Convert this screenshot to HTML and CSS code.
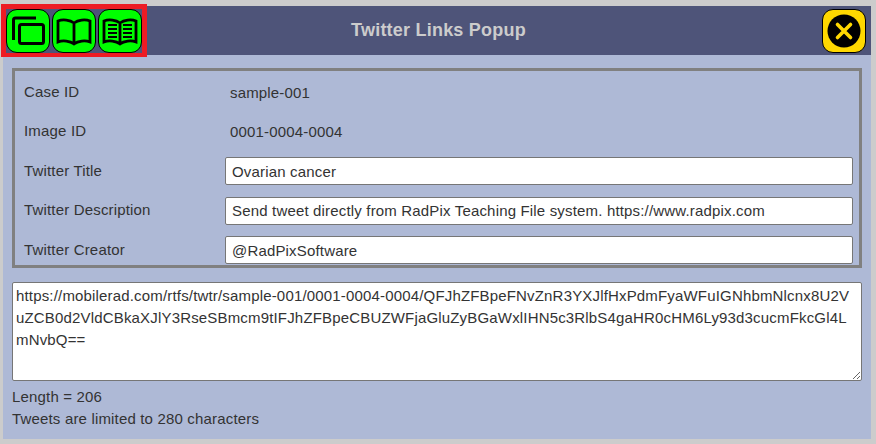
FILE: index.html
```html
<!DOCTYPE html>
<html lang="en">

<head>
    <meta charset="UTF-8">
    <title>Twitter Links Popup</title>
    <link rel="stylesheet" href="styles.css">
</head>

<body>
    <div class="popup">
        <div class="popup-header">
            <div class="tool-group">
                <button class="icon-btn green" type="button" aria-label="Copy">
                    <svg viewBox="0 0 44 44" width="44" height="44">
                        <path d="M7.5 31V11a2 2 0 0 1 2-2H30" class="stroke"/>
                        <rect x="13.5" y="15.5" width="24" height="19" rx="2" class="stroke"/>
                    </svg>
                </button>
                <button class="icon-btn green" type="button" aria-label="Open book">
                    <svg viewBox="0 0 44 44" width="44" height="44">
                        <path d="M22 14c-4-3-11-4-16-2v21c5-2 12-1 16 2 4-3 11-4 16-2V12c-5-2-12-1-16 2zM22 14v20" class="stroke thin"/>
                    </svg>
                </button>
                <button class="icon-btn green" type="button" aria-label="Read book">
                    <svg viewBox="0 0 44 44" width="44" height="44">
                        <path d="M22 14c-4-3-11-4-16-2v21c5-2 12-1 16 2 4-3 11-4 16-2V12c-5-2-12-1-16 2zM22 14v20" class="stroke thin"/>
                        <path d="M10 16h9M10 20h9M10 24h9M10 28h9M25 16h9M25 20h9M25 24h9M25 28h9" class="lines"/>
                    </svg>
                </button>
            </div>
            <h1 class="popup-title">Twitter Links Popup</h1>
            <div class="close-wrap">
                <button class="icon-btn yellow" type="button" aria-label="Close">
                    <svg viewBox="0 0 44 44" width="44" height="44">
                        <circle cx="22" cy="22" r="16.5" fill="#000"/>
                        <path d="M15.5 15.5l13 13M28.5 15.5l-13 13" class="cross"/>
                    </svg>
                </button>
            </div>
        </div>

        <div class="popup-body">
            <div class="field-box">
                <div class="row">
                    <label>Case ID</label>
                    <span class="value">sample-001</span>
                </div>
                <div class="row">
                    <label>Image ID</label>
                    <span class="value">0001-0004-0004</span>
                </div>
                <div class="row">
                    <label for="title">Twitter Title</label>
                    <input type="text" id="title" value="Ovarian cancer">
                </div>
                <div class="row">
                    <label for="desc">Twitter Description</label>
                    <input type="text" id="desc" value="Send tweet directly from RadPix Teaching File system. https://www.radpix.com">
                </div>
                <div class="row">
                    <label for="creator">Twitter Creator</label>
                    <input type="text" id="creator" value="@RadPixSoftware">
                </div>
            </div>

            <textarea class="link-text" spellcheck="false">https://mobilerad.com/rtfs/twtr/sample-001/0001-0004-0004/QFJhZFBpeFNvZnR3YXJlfHxPdmFyaWFuIGNhbmNlcnx8U2VuZCB0d2VldCBkaXJlY3RseSBmcm9tIFJhZFBpeCBUZWFjaGluZyBGaWxlIHN5c3RlbS4gaHR0cHM6Ly93d3cucmFkcGl4LmNvbQ==</textarea>

            <div class="note">Length = 206</div>
            <div class="note">Tweets are limited to 280 characters</div>
        </div>

        <div class="highlight"></div>
    </div>
</body>

</html>
```

FILE: styles.css
```css
html,
body {
    margin: 0;
    height: 100%;
}

body {
    background-color: #cccccc;
    font-family: "Liberation Sans", Arial, sans-serif;
    font-size: 15px;
    letter-spacing: 0.17px;
    color: #333;
    overflow: hidden;
}

.popup {
    position: relative;
    margin: 6px 5px 5px 3px;
    height: 433px;
    background-color: #aeb9d6;
}

.popup-header {
    display: grid;
    grid-template-columns: 1fr auto 1fr;
    align-items: center;
    height: 49px;
    padding: 0 5px 0 3px;
    background-color: #4e5479;
}

.tool-group {
    display: flex;
    gap: 2px;
}

.close-wrap {
    display: flex;
    justify-content: flex-end;
}

.popup-title {
    margin: 0;
    padding-left: 5px;
    font-size: 18px;
    font-weight: bold;
    letter-spacing: 0.22px;
    text-align: center;
    color: #cccccc;
}

.icon-btn {
    display: block;
    width: 44px;
    height: 44px;
    padding: 0;
    border: 1px solid #000;
    border-radius: 11px;
}

.icon-btn svg {
    display: block;
    margin: -1px;
}

.green {
    background-color: #00ff00;
}

.yellow {
    background-color: #ffd800;
}

.stroke {
    fill: none;
    stroke: #000;
    stroke-width: 3;
}

.thin {
    stroke-width: 2.8;
}

.lines {
    fill: none;
    stroke: #000;
    stroke-width: 1.8;
}

.cross {
    fill: none;
    stroke: #ffd800;
    stroke-width: 3.6;
    stroke-linecap: round;
}

.popup-body {
    padding: 13px 9px 0;
}

.field-box {
    display: flex;
    flex-direction: column;
    gap: 11.5px;
    box-sizing: border-box;
    height: 200px;
    padding: 7px 6px 0 9px;
    border: 3px solid #808080;
}

.row {
    display: flex;
    align-items: center;
    height: 28px;
    flex-shrink: 0;
}

.row label {
    width: 201px;
    flex-shrink: 0;
    margin-top: -2px;
}

.value {
    padding-left: 5px;
}

.row input {
    flex: 1;
    min-width: 0;
    box-sizing: border-box;
    height: 28px;
    padding: 0 6px;
    border: 1px solid #767676;
    border-radius: 2px;
    background-color: #fff;
    color: #333;
    font: inherit;
    letter-spacing: inherit;
}

.link-text {
    display: block;
    box-sizing: border-box;
    width: 850px;
    height: 99px;
    margin: 14px 0 5px;
    padding: 2px 6px 2px 3px;
    border: 1px solid #767676;
    border-radius: 2px;
    background-color: #fff;
    color: #333;
    font: inherit;
    letter-spacing: inherit;
    line-height: 22px;
    word-break: break-all;
    overflow: hidden;
}

.note {
    line-height: 22px;
}

.highlight {
    position: absolute;
    left: -2px;
    top: -2px;
    box-sizing: border-box;
    width: 146px;
    height: 53px;
    border: 5px solid #ed1c24;
    border-bottom-width: 4px;
    pointer-events: none;
}
```
